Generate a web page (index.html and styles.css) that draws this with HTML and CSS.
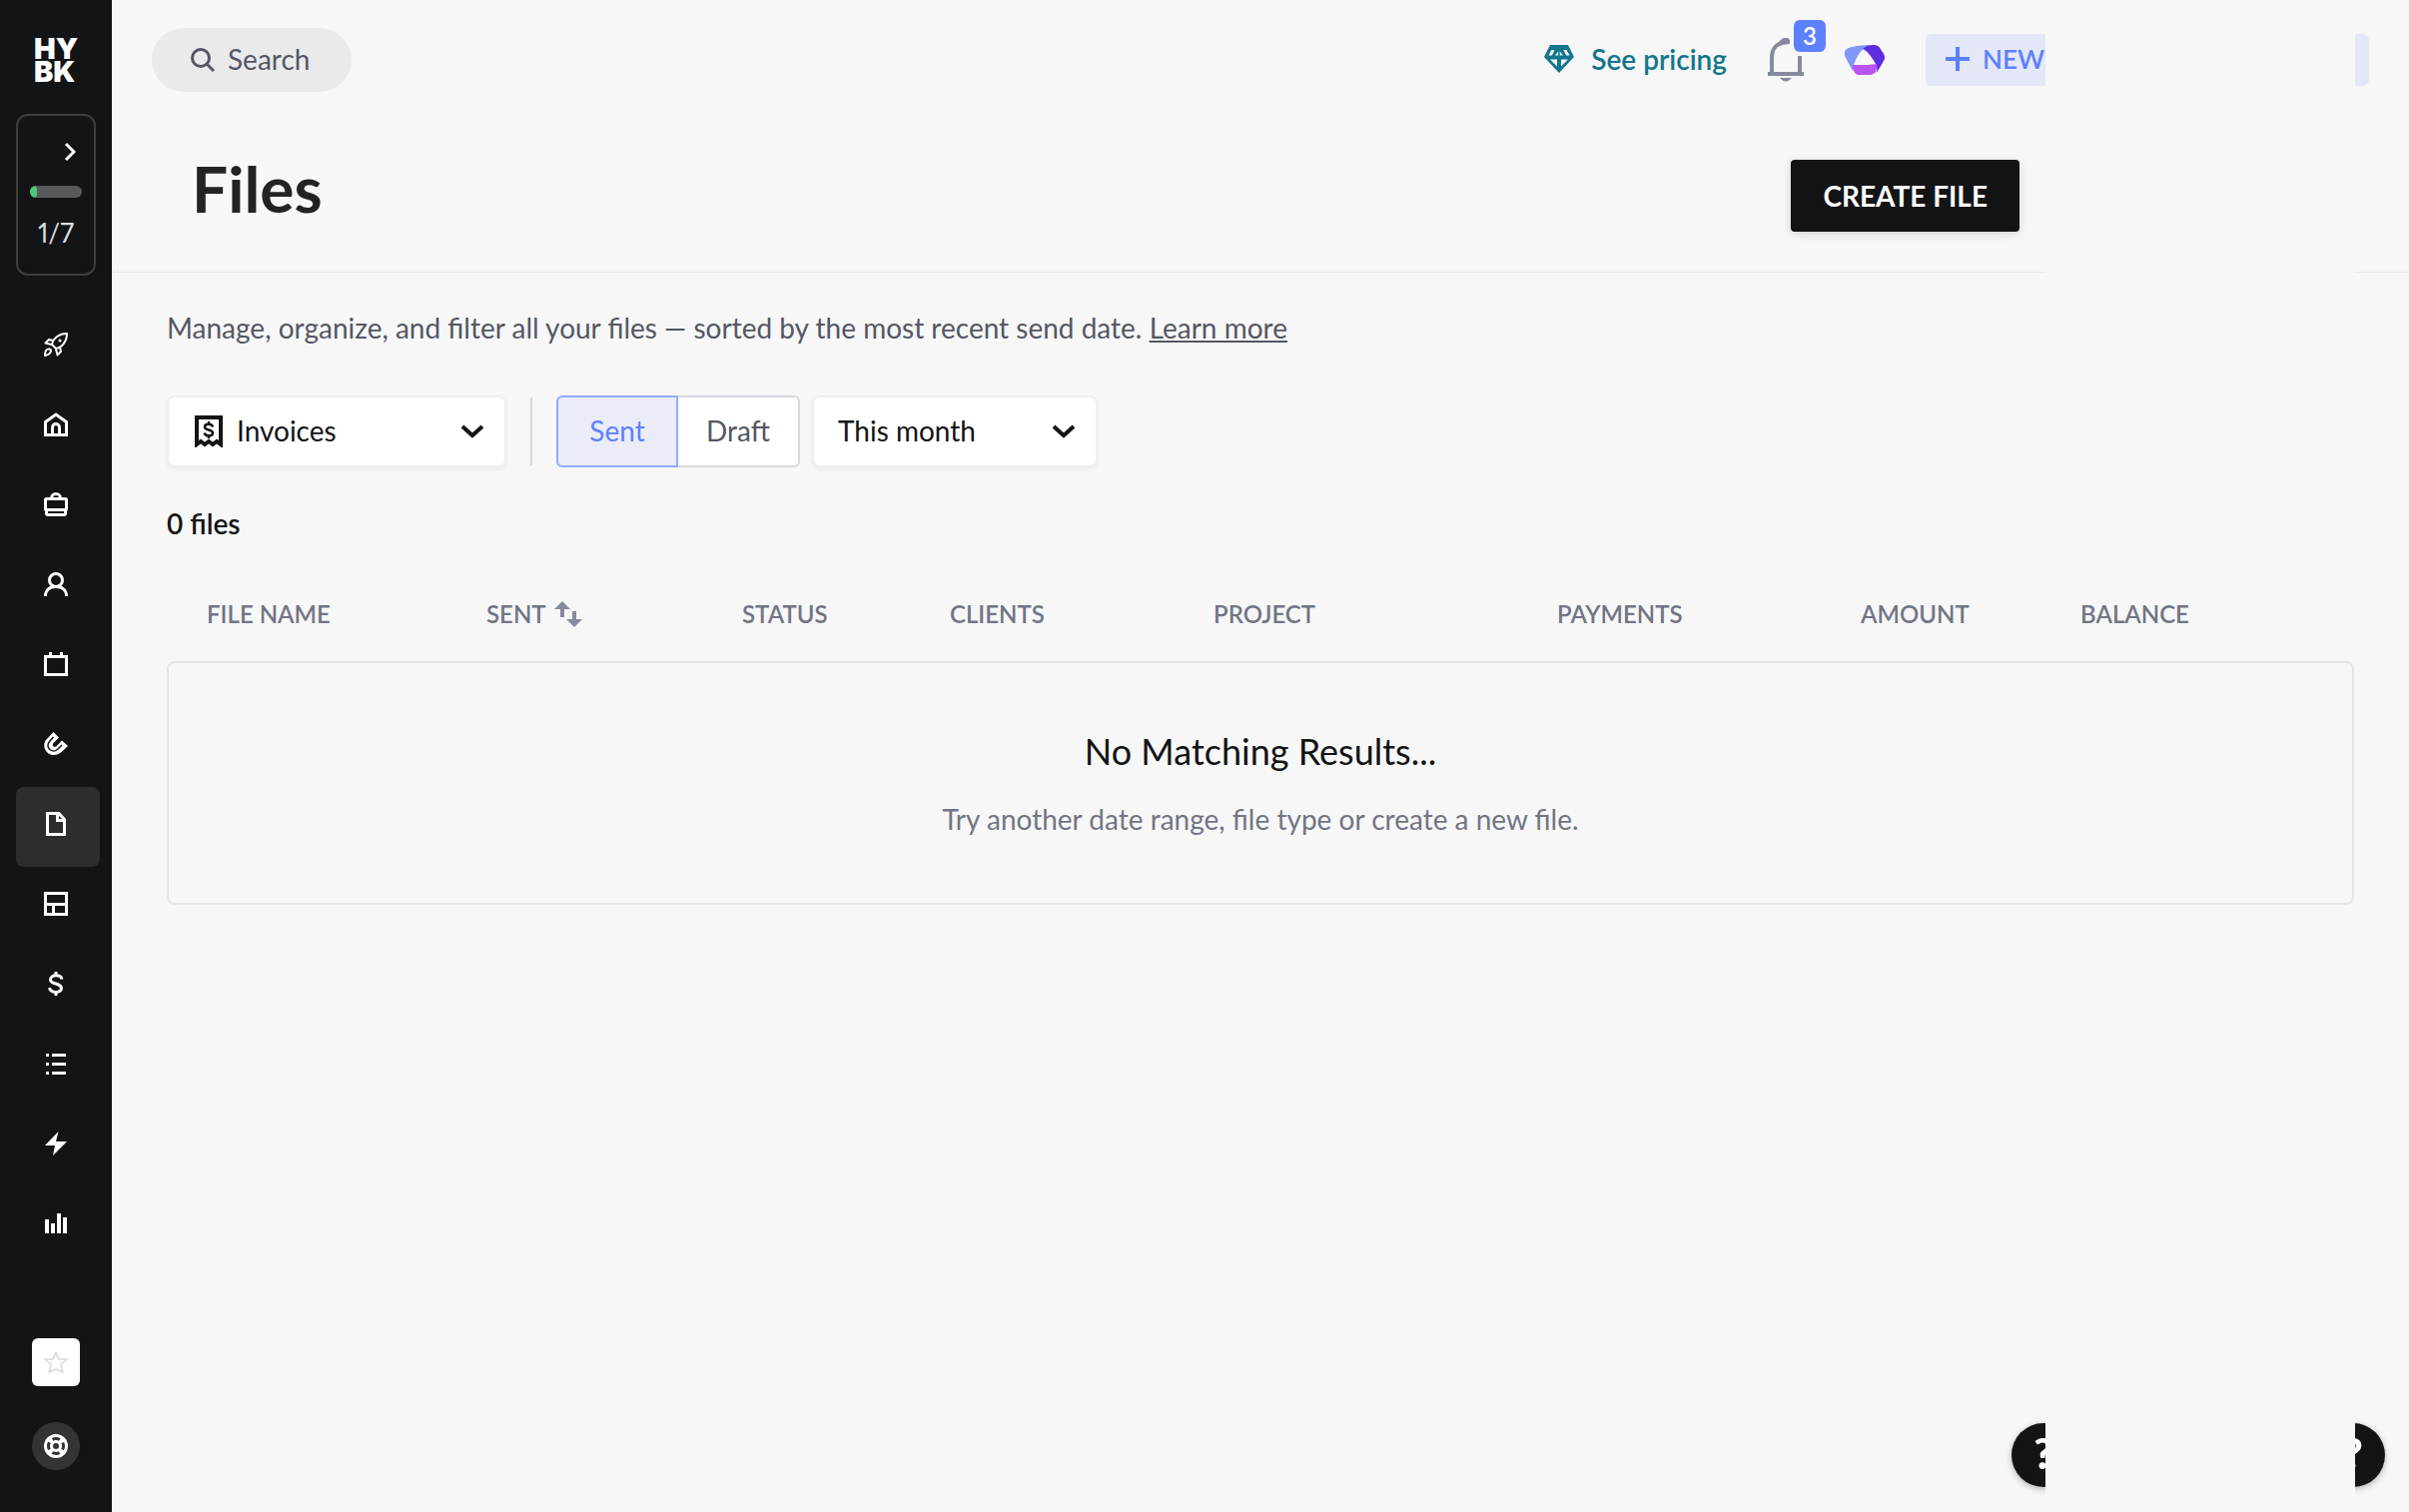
FILE: index.html
```html
<!DOCTYPE html>
<html lang="en">
<head>
<meta charset="utf-8">
<title>Files</title>
<meta name="viewport" content="width=device-width, initial-scale=1">
<link rel="stylesheet" href="styles.css">
</head>
<body>
<div class="app">
  <aside class="sidebar">
    <a class="logo" href="#">HY<br>BK</a>
    <button class="progress" type="button" aria-label="Setup progress">
      <svg class="progress-arrow" width="12" height="20" viewBox="0 0 12 20" fill="none" stroke="#fff" stroke-width="3"><path d="M2 2l8 8-8 8"/></svg>
      <span class="progress-bar"><span class="progress-fill"></span></span>
      <span class="progress-text">1/7</span>
    </button>
    <nav class="nav" aria-label="Main">
      <a class="nav-item" href="#" aria-label="Get started"><svg viewBox="0 0 24 24" fill="none" stroke="#fff" stroke-width="2" stroke-linejoin="round"><path d="M8 12C9 6 15 1 23 1c0 8-5 14-11 15z"/><path d="M9 8L5 7 1.500 10.500 7.500 12M16 15l1 4-3.500 3.500L12 16.500M1 23c0-3 .5-5 2-6s4-.5 4 1-1 4-6 5z"/><circle cx="16" cy="8" r="1.500" fill="#fff" stroke="none"/></svg></a>
      <a class="nav-item" href="#" aria-label="Home"><svg viewBox="0 0 24 24" fill="none" stroke="#fff" stroke-width="3"><path d="M1.500 22.500V9.500L12 2l10.500 7.500v13z"/><path d="M8.500 22v-7a3.500 3.500 0 0 1 7 0v7"/></svg></a>
      <a class="nav-item" href="#" aria-label="Projects"><svg viewBox="0 0 24 24" fill="none" stroke="#fff" stroke-width="3"><rect x="1.500" y="6.500" width="21" height="11" rx="1"/><path d="M7.500 6c0-6 9-6 9 0M2.500 17v4q0 1.500 1.500 1.500h16q1.500 0 1.500-1.500v-4"/></svg></a>
      <a class="nav-item" href="#" aria-label="Contacts"><svg viewBox="0 0 24 24" fill="none" stroke="#fff" stroke-width="3"><circle cx="12" cy="8" r="6.500"/><path d="M1.500 24c0-6 4-9.500 10.500-9.500S22.500 18 22.500 24"/></svg></a>
      <a class="nav-item" href="#" aria-label="Calendar"><svg viewBox="0 0 24 24" fill="none" stroke="#fff" stroke-width="3"><path d="M1.500 4.500h21v18h-21zM6.500 0v4M17.500 0v4"/></svg></a>
      <a class="nav-item" href="#" aria-label="Leads"><svg viewBox="0 0 24 24"><path fill="#fff" d="M9.500 0L15 5.500 9.500 11q-1.500 2 0 3.200t3 0L18 8.500l6 5.500-7 6.500C7 28-4 17 2 8z"/><path d="M9.500 5L6 9c-6 6 2.500 13.500 8 8l4-4" fill="none" stroke="#131416" stroke-width="1.500"/></svg></a>
      <a class="nav-item is-active" href="#" aria-label="Files" aria-current="page"><svg viewBox="0 0 24 24" fill="none" stroke="#fff" stroke-width="3"><path d="M3.500 1.500H15l5.500 6v15h-17z"/><path d="M13.500 1v7.500H21"/></svg></a>
      <a class="nav-item" href="#" aria-label="Templates"><svg viewBox="0 0 24 24" fill="none" stroke="#fff" stroke-width="3"><path d="M1.500 1.500h21v21h-21zM1 12.500h22M9.500 13v10"/></svg></a>
      <a class="nav-item" href="#" aria-label="Finances"><svg viewBox="0 0 24 24" fill="none" stroke="#fff" stroke-width="3"><path d="M18 7.500C17 2.500 6.500 2.500 6.500 8c0 5 11 3 11 8.500 0 5.500-11 5-12-.5M12 0v4M12 20v4"/></svg></a>
      <a class="nav-item" href="#" aria-label="Tasks"><svg viewBox="0 0 24 24" fill="#fff"><path d="M2 2h3v3H2zM8 2h14v3H8zM2 11h3v3H2zM8 11h14v3H8zM2 20h3v3H2zM8 20h14v3H8z"/></svg></a>
      <a class="nav-item" href="#" aria-label="Automations"><svg viewBox="0 0 24 24" fill="#fff"><path d="M14.500 0L1 14h10L9 24l14-14H12z"/></svg></a>
      <a class="nav-item" href="#" aria-label="Reports"><svg viewBox="0 0 24 24" fill="#fff"><path d="M1 8h4v14H1zM7 12h4v10H7zM13 2h4v20h-4zM19 6h4v16h-4z"/></svg></a>
    </nav>
    <div class="sidebar-foot">
      <button class="brand" type="button" aria-label="Company"><svg width="24" height="24" viewBox="0 0 24 24" fill="none" stroke="#d9d9d9" stroke-width="1.500" stroke-linejoin="round"><path d="M12 2l2.700 7H23l-6.200 5 2 8L12 19l-6.800 3 2-8L1 9h8.300z"/></svg></button>
      <button class="support" type="button" aria-label="Support"><svg width="24" height="24" viewBox="0 0 24 24"><circle cx="12" cy="12" r="12" fill="#fff"/><circle cx="12" cy="12" r="7.500" fill="none" stroke="#333436" stroke-width="3" stroke-dasharray="7.500 4.280" stroke-dashoffset="3.750"/><circle cx="12" cy="12" r="3" fill="#333436"/></svg></button>
    </div>
  </aside>

  <main class="main">
    <header class="topbar">
      <label class="search">
        <svg width="24" height="24" viewBox="0 0 24 24" fill="none" stroke="#545764" stroke-width="3"><circle cx="10" cy="10" r="8.500"/><path d="M16 16l7 7"/></svg>
        <input class="search-input" type="text" placeholder="Search" aria-label="Search">
      </label>
      <div class="actions">
        <a class="pricing" href="#">
          <svg width="32" height="28" viewBox="0 0 32 28"><path fill="#12768c" d="M7 0h18l6 12-15 16L1 12z"/><path fill="#f7f7f7" d="M8.500 5l3 0-2.500 5.500H5.500zM12 10.500l4-5 4 5zM20.500 5h3l3 5.500H23zM7 14.500h7v7zM18 14.500h7l-7 7z"/><path stroke="#12768c" stroke-width="1.500" d="M16 5v6"/></svg>
          See pricing
        </a>
        <button class="bell" type="button" aria-label="Notifications">
          <svg width="36" height="44" viewBox="0 0 36 44"><path d="M4 34V20C4 12 8 6 15 5M32 18v16" fill="none" stroke="#868a9c" stroke-width="4"/><path d="M11 4q7-8 11-2v4l-8 1zM0 34h36v4H0zM12 40h12q-6 7-12 0z" fill="#868a9c"/></svg>
          <span class="badge">3</span>
        </button>
        <button class="assistant" type="button" aria-label="Assistant">
          <svg width="40" height="30" viewBox="0 0 40 30"><path fill="#8098f8" d="M27 0C18 0 9 1 4 3-1 5-1 9 1 13l7 13q0-5 3-11c3-6 5-9 8-11z"/><path fill="#5c2ee0" d="M18 4C21 1 25 0 29 0c4 0 6 2 8 6 3 4 4 6 2 10l-7 12q1-6-1-9C27 12 23 6 18 4z"/><path fill="#bb52f4" d="M8 20h15l9-1q1 4-1 8-2 3-5 3H14q-3 0-5-4-2-3-1-6z"/></svg>
        </button>
        <button class="new" type="button"><svg width="24" height="24" viewBox="0 0 24 24" stroke="#5c80ff" stroke-width="4"><path d="M12 0v24M0 12h24"/></svg>NEW</button>
      </div>
    </header>

    <div class="title-row">
      <h1 class="title">Files</h1>
      <button class="create" type="button">CREATE FILE</button>
    </div>
    <div class="header-cover"></div>

    <section class="content">
      <p class="intro">Manage, organize, and filter all your files — sorted by the most recent send date. <a class="learn" href="#">Learn more</a></p>
      <form class="filters">
        <div class="picker picker-type">
          <svg class="picker-icon" width="28" height="32" viewBox="0 0 28 32"><path d="M2 29V2h24v27l-4-3-4 3-4-3-4 3-4-3z" fill="none" stroke="#131416" stroke-width="4"/><path d="M18 11.500c-1-4-8-3.500-8 0 0 4 8 2 8 6 0 3.500-7 4-8.500 0M14 6v3M14 20v3" fill="none" stroke="#131416" stroke-width="2.500"/></svg>
          <select class="select" aria-label="File type"><option>Invoices</option></select>
          <svg class="picker-arrow" width="24" height="14" viewBox="0 0 24 14" fill="none" stroke="#131416" stroke-width="4"><path d="M2 2l10 9L22 2"/></svg>
        </div>
        <span class="divider"></span>
        <div class="segments">
          <label class="segment"><input class="segment-input" type="radio" name="state" checked><span class="segment-text">Sent</span></label>
          <label class="segment"><input class="segment-input" type="radio" name="state"><span class="segment-text">Draft</span></label>
        </div>
        <div class="picker picker-date">
          <select class="select" aria-label="Date range"><option>This month</option></select>
          <svg class="picker-arrow" width="24" height="14" viewBox="0 0 24 14" fill="none" stroke="#131416" stroke-width="4"><path d="M2 2l10 9L22 2"/></svg>
        </div>
      </form>
      <p class="count">0 files</p>
      <table class="files">
        <colgroup><col class="c-name"><col class="c-sent"><col class="c-status"><col class="c-clients"><col class="c-project"><col class="c-payments"><col class="c-amount"><col></colgroup>
        <thead>
          <tr>
            <th>FILE NAME</th>
            <th><span class="sort">SENT <svg width="28" height="26" viewBox="0 0 28 26" fill="#868a9c"><path d="M8 0l8 8h-6v8H6V8H0zM18 10h4v8h6l-8 8-8-8h6z"/></svg></span></th>
            <th>STATUS</th><th>CLIENTS</th><th>PROJECT</th><th>PAYMENTS</th><th>AMOUNT</th><th>BALANCE</th>
          </tr>
        </thead>
        <tbody>
          <tr><td class="empty" colspan="8"><h2 class="empty-title">No Matching Results...</h2><p class="empty-text">Try another date range, file type or create a new file.</p></td></tr>
        </tbody>
      </table>
    </section>
  </main>
</div>

<div class="help-bar">
  <button class="help" type="button" aria-label="Help">?</button>
  <button class="help" type="button" aria-label="Help">?</button>
</div>
</body>
</html>
```

FILE: styles.css
```css
* { box-sizing: border-box; }

body {
  margin: 0;
  background: #f7f7f7;
  color: #131416;
  font: 28px/40px Lato, "Open Sans", sans-serif;
}

h1, h2, p { margin: 0; font-weight: 400; }
button, input, select { font: inherit; color: inherit; }
button { padding: 0; border: 0; background: none; cursor: pointer; }
a { color: inherit; text-decoration: none; }
svg { display: block; flex: none; }

.app { display: flex; min-height: 100vh; }

/* Sidebar */
.sidebar {
  display: flex;
  flex-direction: column;
  flex: none;
  width: 112px;
  padding: 37px 0 42px;
  background: #131416;
}
.logo {
  align-self: center;
  color: #fff;
  font: 900 29px/23px Inter, sans-serif;
}
.progress {
  display: flex;
  flex-direction: column;
  align-items: center;
  width: 80px;
  height: 162px;
  margin: 31px 0 32px 16px;
  padding-top: 26px;
  border: 2px solid #3c3d3f;
  border-radius: 12px;
}
.progress-arrow { align-self: flex-end; margin-right: 18px; }
.progress-bar {
  width: 52px;
  height: 12px;
  margin: 24px 0 15px;
  overflow: hidden;
  border-radius: 6px;
  background: #58595b;
}
.progress-fill {
  display: block;
  width: 7px;
  height: 12px;
  border-radius: 4px;
  background: #4fc878;
}
.progress-text {
  color: #dcdcdd;
  font-size: 26px;
  font-variant-numeric: proportional-nums;
}

.nav-item {
  display: flex;
  align-items: center;
  width: 84px;
  height: 80px;
  margin-left: 16px;
  padding: 0 0 6px 28px;
  border-radius: 8px;
}
.nav-item.is-active { background: #2c2d2f; }
.nav-item svg { width: 24px; height: 24px; }

.sidebar-foot {
  display: flex;
  flex-direction: column;
  align-items: center;
  gap: 36px;
  margin-top: auto;
}
.brand, .support {
  display: grid;
  place-items: center;
  width: 48px;
  height: 48px;
}
.brand { border-radius: 6px; background: #fff; }
.support { border-radius: 50%; background: #333436; }

/* Top bar */
.main { position: relative; flex: 1; min-width: 0; }
.topbar {
  display: flex;
  align-items: center;
  justify-content: space-between;
  height: 120px;
  padding: 0 40px;
}
.search {
  display: flex;
  align-items: center;
  gap: 13px;
  width: 200px;
  height: 64px;
  padding: 0 20px 0 39px;
  border-radius: 32px;
  background: #e9eaec;
  color: #545764;
}
.search-input {
  flex: 1;
  min-width: 0;
  padding: 0 0 2px;
  border: 0;
  outline: 0;
  background: none;
}
.search-input::placeholder { color: #545764; opacity: 1; }
.actions { display: flex; align-items: center; gap: 41px; }
.pricing {
  display: flex;
  align-items: center;
  gap: 16px;
  padding-bottom: 2px;
  color: #12768c;
  font-weight: 600;
}
.bell { position: relative; }
.badge {
  position: absolute;
  top: -18px;
  left: 26px;
  width: 32px;
  height: 32px;
  border-radius: 6px;
  background: #5c80ff;
  color: #fff;
  font-size: 24px;
  font-weight: 600;
  line-height: 32px;
}
.new {
  display: flex;
  align-items: center;
  gap: 13px;
  width: 444px;
  height: 52px;
  padding: 0 0 2px 20px;
  border-radius: 6px;
  background: #e4e7f8;
  color: #5c80ff;
  font-size: 26px;
  font-weight: 600;
}

/* Page title */
.title-row {
  display: flex;
  align-items: center;
  justify-content: space-between;
  height: 153px;
  padding: 0 390px 0 80px;
  border-bottom: 1px solid #ebebec;
}
.title {
  padding-bottom: 14px;
  color: #232323;
  font-size: 64px;
  font-weight: 700;
  line-height: 72px;
}
.create {
  height: 72px;
  padding: 0 32px;
  border-radius: 4px;
  background: #131416;
  box-shadow: 0 2px 8px rgba(19, 20, 22, 0.16);
  color: #fff;
  font-weight: 700;
}
.header-cover {
  position: absolute;
  top: 0;
  right: 54px;
  width: 310px;
  height: 280px;
  background: #f7f7f7;
}

/* Content */
.content { padding: 35px 55px; }
.intro { color: #545764; }
.learn { text-decoration: underline; }
.filters { display: flex; align-items: center; margin-top: 48px; }
.picker {
  position: relative;
  display: flex;
  align-items: center;
  height: 72px;
  border: 2px solid #efeff0;
  border-radius: 8px;
  background: #fff;
  box-shadow: 0 2px 4px rgba(19, 20, 22, 0.06);
}
.picker-type { width: 340px; }
.picker-date { width: 286px; margin-left: 12px; }
.picker-icon, .picker-arrow { position: absolute; pointer-events: none; }
.picker-icon { left: 26px; }
.picker-arrow { right: 20px; }
.select {
  width: 100%;
  height: 100%;
  padding: 0 56px 2px 24px;
  border: 0;
  outline: 0;
  background: none;
  appearance: none;
}
.picker-type .select { padding-left: 68px; }
.divider { width: 2px; height: 68px; margin: 0 24px; background: #d6d8e0; }
.segments { display: flex; }
.segment { position: relative; }
.segment-input { position: absolute; inset: 0; margin: 0; opacity: 0; }
.segment-text {
  display: block;
  width: 122px;
  height: 72px;
  border: 2px solid #d6d8e0;
  border-left: 0;
  border-radius: 0 6px 6px 0;
  background: #fff;
  color: #545764;
  line-height: 66px;
  text-align: center;
}
.segment-input:checked + .segment-text {
  border: 2px solid #92aaff;
  border-radius: 6px 0 0 6px;
  background: #eaecf8;
  color: #5c80ff;
}
.count { margin: 36px 0 24px; font-weight: 600; }

/* Files table */
.files {
  width: 100%;
  border-spacing: 0;
  table-layout: fixed;
}
.c-name { width: 280px; }
.c-sent { width: 256px; }
.c-status { width: 208px; }
.c-clients { width: 264px; }
.c-project { width: 344px; }
.c-payments { width: 304px; }
.c-amount { width: 220px; }
.files th {
  height: 94px;
  padding: 0 0 0 40px;
  color: #717584;
  font-size: 24px;
  font-weight: 600;
  text-align: left;
}
.sort { display: flex; align-items: center; gap: 8px; }
.empty {
  padding: 64px 24px;
  border: 2px solid #e4e5ea;
  border-radius: 8px;
  text-align: center;
}
.empty-title { margin-bottom: 24px; font-size: 36px; line-height: 48px; }
.empty-text { color: #717584; }

/* Floating help */
.help-bar {
  position: fixed;
  right: 24px;
  bottom: 25px;
  display: flex;
  justify-content: space-between;
  width: 374px;
}
.help-bar::after {
  content: "";
  position: absolute;
  top: -8px;
  right: 30px;
  bottom: -16px;
  width: 310px;
  background: #f7f7f7;
}
.help {
  width: 64px;
  height: 64px;
  padding-bottom: 4px;
  border-radius: 50%;
  background: #131416;
  box-shadow: 0 2px 6px rgba(19, 20, 22, 0.3);
  color: #fff;
  font-size: 42px;
  font-weight: 900;
}
```
